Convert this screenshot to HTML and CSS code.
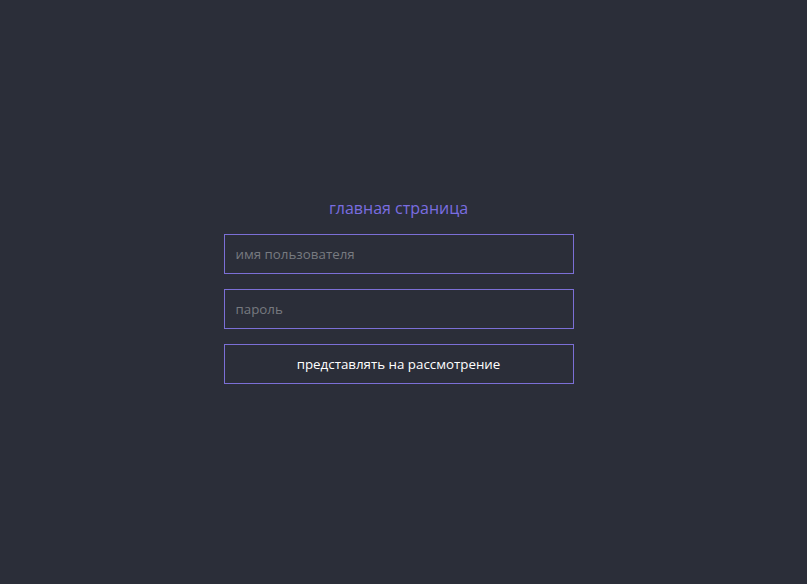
FILE: index.html
```html
<!DOCTYPE html>
<html lang="ru">
<head>
<meta charset="utf-8">
<link rel="stylesheet" href="styles.css">
</head>
<body>
<main class="page">
  <form class="login">
    <h1 class="title">главная страница</h1>
    <input class="field" type="text" placeholder="имя пользователя">
    <input class="field" type="password" placeholder="пароль">
    <button class="submit" type="button">представлять на рассмотрение</button>
  </form>
</main>
</body>
</html>
```
FILE: styles.css
```css
html, body {
  margin: 0;
  padding: 0;
  height: 100%;
  background: #2b2e39;
}
.page {
  box-sizing: border-box;
  height: 100%;
  padding-right: 10px;
  display: flex;
  align-items: center;
  justify-content: center;
  font-family: "Open Sans", sans-serif;
}
.login {
  width: 350px;
  display: flex;
  flex-direction: column;
  gap: 15px;
  margin-top: -3px;
}
.title {
  margin: 0;
  font-size: 16px;
  font-weight: 400;
  line-height: 22px;
  text-align: center;
  color: #7a6de0;
}
.field, .submit {
  box-sizing: border-box;
  height: 40px;
  width: 100%;
  margin: 0;
  border: 1px solid #7b6fd6;
  background: transparent;
  font-family: "Open Sans", sans-serif;
  font-size: 13.333px;
  outline: none;
}
.field {
  padding: 0 11px;
  color: #ddd;
}
.field::placeholder {
  color: #777a80;
}
.submit {
  color: #ffffff;
  cursor: pointer;
}
```
